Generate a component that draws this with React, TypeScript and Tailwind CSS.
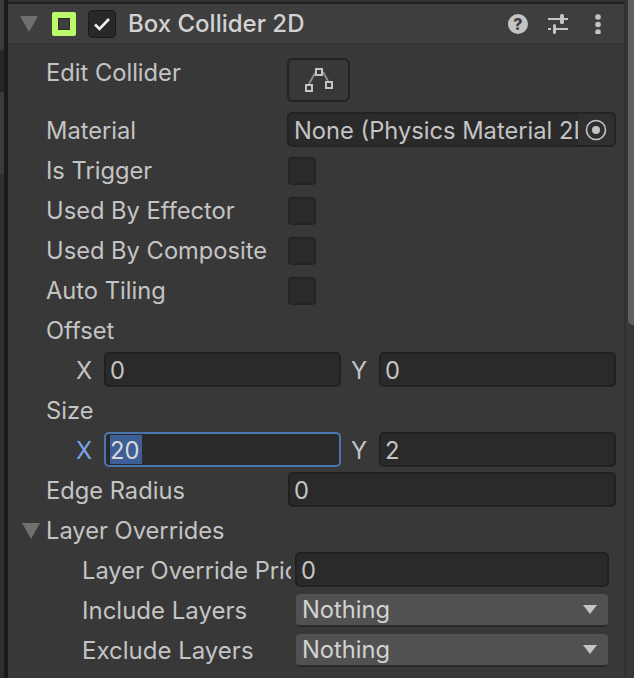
import { ReactNode } from "react";

function Triangle({ className }: { className: string }) {
  return (
    <svg className={className} width="18" height="16" viewBox="0 0 18 16">
      <path d="M0 0H18L9 16Z" fill="#707070" />
    </svg>
  );
}

function Row({ children, className = "" }: { children: ReactNode; className?: string }) {
  return <div className={`flex h-[40px] items-center ${className}`}>{children}</div>;
}

function Label({ children }: { children: ReactNode }) {
  return <div className="w-[241px] shrink-0 overflow-hidden whitespace-nowrap leading-[40px]">{children}</div>;
}

function Field({ value, className = "" }: { value: string; className?: string }) {
  return (
    <div className={`mt-px flex h-[35px] items-center self-start rounded-[5px] border-2 border-[#212121] bg-[#2a2a2a] pl-[4px] pt-[2px] ${className}`}>
      {value}
    </div>
  );
}

function Check() {
  return <div className="ml-px h-[28px] w-[28px] rounded-[4px] border-2 border-[#242424] bg-[#2a2a2a]" />;
}

function Dropdown() {
  return (
    <div className="mt-[3px] flex h-[33px] w-[312px] items-center justify-between self-start rounded-[4px] border-b-2 border-[#2a2a2a] bg-[#515151] pl-[6px] pr-[11px] text-[#d2d2d2]">
      <span>Nothing</span>
      <svg width="14" height="9" viewBox="0 0 14 9">
        <path d="M0 0H14L7 9Z" fill="#c4c4c4" />
      </svg>
    </div>
  );
}

export default function App() {
  return (
    <div className="flex h-[678px] w-[634px] overflow-hidden bg-[#383838] font-['Inter',sans-serif] text-[23.7px] text-[#c4c4c4]">
      {/* neighbouring panel peeking in on the left */}
      <div className="w-[8px] shrink-0 border-r-[4px] border-[#1a1a1a] bg-[#2e2e2e]">
        <div className="h-[50px] bg-[#3a3a3a]" />
        <div className="h-[42px] rounded-r-[3px] bg-[#262626]" />
        <div className="h-[83px] bg-[#3a3a3a]" />
      </div>

      <div className="w-[616px] shrink-0">
        <div className="h-[2px] bg-[#333333]" />
        <div className="h-[2px] bg-[#202020]" />
        <div className="flex h-[41px] items-center border-b-2 border-b-[#343434] bg-[#3e3e3e] pl-[12px] pr-[23px]">
          <Triangle className="shrink-0" />
          <div className="ml-[14px] flex h-[24px] w-[24px] items-center justify-center rounded-[2px] bg-[#b9fb69]">
            <div className="h-[12px] w-[12px] border border-[#2d2d2d] bg-[#3e3e3e]" />
          </div>
          <div className="ml-[12px] flex h-[28px] w-[28px] items-center justify-center rounded-[4px] border border-[#1b1b1b] bg-[#282828]">
            <svg width="18" height="14" viewBox="0 0 18 14" fill="none">
              <path d="M2 7.5L6.5 12L16 2" stroke="#f0f0f0" strokeWidth="2.6" />
            </svg>
          </div>
          <div className="ml-[12px] grow pt-px text-[24px] font-medium text-[#d2d2d2]">Box Collider 2D</div>
          <div className="mr-[20px] flex h-[20px] w-[20px] items-center justify-center rounded-full bg-[#c4c4c4] text-[16px] font-extrabold leading-none text-[#3e3e3e]">
            ?
          </div>
          <svg className="mr-[27px]" width="20" height="20" viewBox="0 0 20 20" fill="#c4c4c4">
            <rect x="0" y="4" width="20" height="2" />
            <rect x="12" y="0" width="4" height="10" rx="1.5" />
            <rect x="0" y="14" width="3" height="2" />
            <rect x="6" y="14" width="14" height="2" />
            <rect x="5" y="10" width="3" height="10" rx="1.5" />
          </svg>
          <svg width="6" height="20" viewBox="0 0 6 20" fill="#c4c4c4">
            <circle cx="3" cy="3" r="2.8" />
            <circle cx="3" cy="10.5" r="2.8" />
            <circle cx="3" cy="18" r="2.8" />
          </svg>
        </div>

        <div className="pl-[38px]">
          <div className="flex h-[66px] items-start">
            <div className="mt-[8px] w-[241px] shrink-0 leading-[40px]">Edit Collider</div>
            <div className="mt-[13px] flex h-[44px] w-[63px] items-center justify-center rounded-[6px] border-2 border-[#232323]">
              <svg width="28" height="24" viewBox="0 0 28 24" fill="none" stroke="#c4c4c4" strokeWidth="2">
                <path d="M4 16L10 5M18 4L23 13" stroke="#8a8a8a" />
                <rect x="11" y="1" width="6" height="6" />
                <rect x="1" y="17" width="6" height="6" />
                <rect x="21" y="14" width="6" height="6" />
              </svg>
            </div>
          </div>

          <Row>
            <Label>Material</Label>
            <div className="mt-px flex h-[35px] w-[329px] items-center self-start overflow-hidden rounded-[5px] border-2 border-[#232323] bg-[#2a2a2a]">
              <div className="w-[289px] overflow-hidden whitespace-nowrap pl-[5px] pt-[3px]">None (Physics Material 2D)</div>
              <div className="flex h-full grow items-center justify-center bg-[#303030]">
                <svg width="22" height="22" viewBox="0 0 22 22" fill="none">
                  <circle cx="11" cy="11" r="9.5" stroke="#c4c4c4" strokeWidth="1.6" />
                  <circle cx="11" cy="11" r="4" fill="#c4c4c4" />
                </svg>
              </div>
            </div>
          </Row>
          <Row>
            <Label>Is Trigger</Label>
            <Check />
          </Row>
          <Row>
            <Label>Used By Effector</Label>
            <Check />
          </Row>
          <Row>
            <Label>Used By Composite</Label>
            <Check />
          </Row>
          <Row>
            <Label>Auto Tiling</Label>
            <Check />
          </Row>
          <Row>
            <Label>Offset</Label>
          </Row>
          <Row className="pl-[30px]">
            <span className="w-[28px]">X</span>
            <Field value="0" className="w-[237px]" />
            <span className="ml-[10px] w-[28px]">Y</span>
            <Field value="0" className="w-[237px]" />
          </Row>
          <Row>
            <Label>Size</Label>
          </Row>
          <Row className="pl-[30px]">
            <span className="w-[28px] text-[#7ba4ec]">X</span>
            <div className="mt-px flex h-[35px] w-[237px] items-center self-start rounded-[5px] border-2 border-[#4a75ad] bg-[#2a2a2a] pl-[4px]">
              <span className="flex h-[29px] w-[32px] items-center bg-[#3e5f96] pt-[2px] text-[#d8d8d8]">20</span>
            </div>
            <span className="ml-[10px] w-[28px]">Y</span>
            <Field value="2" className="w-[237px]" />
          </Row>
          <Row>
            <Label>Edge Radius</Label>
            <Field value="0" className="ml-px w-[328px]" />
          </Row>
        </div>

        <Row className="pl-[14px]">
          <Triangle className="shrink-0" />
          <span className="ml-[6px]">Layer Overrides</span>
        </Row>

        <div className="pl-[74px]">
          <Row>
            <div className="w-[209px] shrink-0 overflow-hidden whitespace-nowrap">Layer Override Priority</div>
            <Field value="0" className="ml-[4px] w-[314px]" />
          </Row>
          <Row>
            <div className="w-[214px] shrink-0 text-[24px]">Include Layers</div>
            <Dropdown />
          </Row>
          <Row>
            <div className="w-[214px] shrink-0 text-[24px]">Exclude Layers</div>
            <Dropdown />
          </Row>
        </div>
      </div>

      <div className="w-[10px] shrink-0 border-l-2 border-[#303030] pl-[2px]">
        <div className="h-[325px] rounded-bl-[5px] bg-[#5f5f5f]" />
      </div>
    </div>
  );
}
